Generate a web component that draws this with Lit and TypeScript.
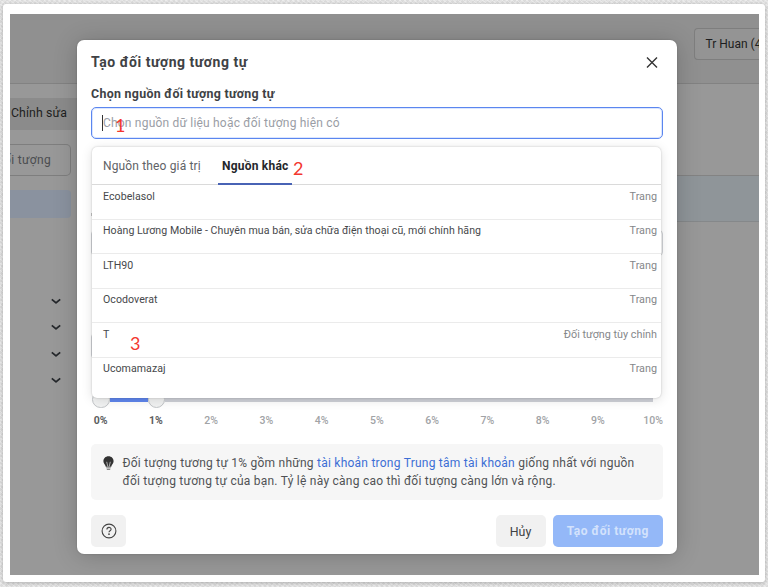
import { LitElement, html, css, svg } from "lit";
import { customElement } from "lit/decorators.js";

const SOURCES: [string, string][] = [
  ["Ecobelasol", "Trang"],
  ["Hoàng Lương Mobile - Chuyên mua bán, sửa chữa điện thoại cũ, mới chính hãng", "Trang"],
  ["LTH90", "Trang"],
  ["Ocodoverat", "Trang"],
  ["T", "Đối tượng tùy chỉnh"],
  ["Ucomamazaj", "Trang"],
];

const chevron = svg`<path d="M.8 1.4 L5 4.9 L9.2 1.4" fill="none" stroke="#24272b" stroke-width="1.8" stroke-linejoin="round"/>`;

@customElement("page-backdrop")
class PageBackdrop extends LitElement {
  static styles = css`
    :host { display: flex; flex-direction: column; height: 100%; background: #989898; color: #1d1e20; }
    .top { height: 70px; box-sizing: border-box; background: #909090; border-bottom: 1px solid #828282; display: flex; justify-content: flex-end; padding-top: 14px; }
    .account { box-sizing: border-box; width: 65px; height: 32px; border: 1px solid #7e7e7e; border-right: 0; border-radius: 4px 0 0 4px; background: #949494; padding-left: 10.5px; line-height: 30px; font-size: 12px; white-space: nowrap; overflow: hidden; }
    .body { flex: 1; display: flex; justify-content: space-between; }
    .left { width: 67px; display: flex; flex-direction: column; }
    .edit { margin-top: 14px; height: 32px; width: 67px; background: #8b8b8b; line-height: 31px; font-size: 12.3px; letter-spacing: .1px; padding-left: 1px; box-sizing: border-box; white-space: nowrap; }
    .search { margin-top: 14px; box-sizing: border-box; width: 61px; height: 32px; border: 1px solid #7e7e7e; border-left: 0; border-radius: 0 5px 5px 0; line-height: 30px; font-size: 12px; letter-spacing: .35px; color: #4b4d50; overflow: hidden; white-space: nowrap; }
    .search span { margin-left: -6px; }
    .selected { margin-top: 14px; width: 61px; height: 28px; background: #8a929f; border-radius: 0 4px 4px 0; }
    .chevrons { margin: 79.5px 0 0 41.2px; display: flex; flex-direction: column; gap: 20.5px; }
    .chevrons svg { display: block; width: 10px; height: 6px; }
    .right { width: 90px; padding-top: 91px; }
    .band { box-sizing: border-box; height: 47px; background: #8f9599; border-top: 1px solid #838383; border-bottom: 1px solid #85888a; }
  `;
  render() {
    return html`
      <div class="top"><div class="account">Tr Huan (4</div></div>
      <div class="body">
        <div class="left">
          <div class="edit">Chỉnh sửa</div>
          <div class="search"><span>ối tượng</span></div>
          <div class="selected"></div>
          <div class="chevrons">${[0, 1, 2, 3].map(() => html`<svg viewBox="0 0 10 6">${chevron}</svg>`)}</div>
        </div>
        <div class="right"><div class="band"></div></div>
      </div>`;
  }
}

@customElement("source-menu")
class SourceMenu extends LitElement {
  static styles = css`
    :host { display: block; box-sizing: border-box; width: 569px; height: 251.5px; background: #fff; border-radius: 5px; box-shadow: 0 0 2px rgba(0,0,0,.22), 0 2px 12px rgba(0,0,0,.12); overflow: hidden; }
    .tabs { height: 38.5px; box-sizing: border-box; border-bottom: 1px solid #dadada; display: flex; padding-left: 11px; font-size: 12px; line-height: 39px; color: #606266; white-space: nowrap; }
    .tab { width: 115px; letter-spacing: .15px; }
    .active { box-sizing: border-box; width: 74px; height: 38px; padding-left: 4px; border-bottom: 2.5px solid #4863b5; font-weight: 700; letter-spacing: .22px; color: #25272b; }
    .row { box-sizing: border-box; height: 34.5px; border-bottom: 1px solid #ebebeb; display: flex; justify-content: space-between; padding: 3.5px 4px 0 11px; font-size: 10.6px; letter-spacing: .05px; line-height: 15px; color: #46484b; white-space: nowrap; }
    .row:last-child { border: 0; }
    .kind { color: #85878a; font-size: 10.8px; letter-spacing: 0; }
  `;
  render() {
    return html`
      <div class="tabs"><div class="tab">Nguồn theo giá trị</div><div class="active">Nguồn khác</div></div>
      ${SOURCES.map(([name, kind]) => html`<div class="row"><span>${name}</span><span class="kind">${kind}</span></div>`)}`;
  }
}

@customElement("app-root")
class AppRoot extends LitElement {
  static styles = css`
    :host { display: block; box-sizing: border-box; width: 768px; height: 587px; padding: 4px 3px 5px; overflow: hidden; font-family: Roboto, "Noto Sans", sans-serif; background: repeating-linear-gradient(38deg, rgba(255,255,255,.35) 0 1px, transparent 1px 3px), repeating-linear-gradient(-52deg, #dcdcdc 0 2px, #e4e4e4 2px 4px); }
    .frame { position: relative; box-sizing: border-box; height: 578px; padding: 10px 6px 7px 7px; background: #fff; border-radius: 3px; box-shadow: 0 1px 4px rgba(0,0,0,.25); }
    .shot { position: relative; height: 561px; width: 749px; overflow: hidden; }
    .modal { position: absolute; left: 67px; top: 26px; width: 600px; height: 514px; box-sizing: border-box; padding: 14px 14px 7px; display: flex; flex-direction: column; background: #fff; border-radius: 7px; box-shadow: 0 2px 24px rgba(0,0,0,.2), 0 0 2px rgba(0,0,0,.2); color: #404245; }
    .head { display: flex; justify-content: space-between; height: 18px; line-height: 17px; font-size: 14px; font-weight: 700; letter-spacing: .53px; }
    .close { width: 12px; height: 12px; margin: 3px 5px 0 0; }
    .label { margin-top: 13px; height: 18px; line-height: 18px; font-size: 12.4px; font-weight: 700; letter-spacing: .3px; }
    .input { margin-top: 4px; box-sizing: border-box; height: 32px; border: 1px solid #5b86ef; border-radius: 5px; box-shadow: inset 0 0 0 1px #dbe6ff; display: flex; align-items: center; padding-left: 10px; font-size: 12px; letter-spacing: .2px; color: #9a9da5; white-space: nowrap; }
    .caret { width: 1px; height: 16px; background: #333; }
    .covered { height: 259px; box-sizing: border-box; padding-top: 74px; display: flex; flex-direction: column; }
    .stub { height: 3px; width: 1px; background: #c4c4c4; }
    .field { box-sizing: border-box; height: 26px; flex: none; border: 1px solid #cfd1d5; border-radius: 4px; }
    .f1 { margin-top: 14px; }
    .f2 { margin-top: 77px; width: 500px; }
    .slider { height: 13px; display: flex; align-items: flex-start; padding: 0 10px 0 1px; }
    .knob { box-sizing: border-box; flex: none; width: 17.5px; height: 17.5px; margin-top: -6px; border: 1px solid #c2c5c8; border-radius: 50%; background: #f1f2f2; }
    .fill { height: 4px; width: 38px; margin-top: 1px; background: #5f86ee; }
    .rail { height: 4px; flex: 1; margin-top: 1px; background: #ced0d7; }
    .ticks { display: flex; width: 607px; margin-left: -18px; height: 14px; margin-top: 5px; line-height: 14px; font-size: 10.5px; font-weight: 500; color: #a1a3a6; }
    .ticks span { flex: 0 0 55.25px; text-align: center; }
    .ticks .on { color: #5b5d60; font-weight: 700; }
    .info { margin-top: 16px; box-sizing: border-box; height: 56px; flex: none; border-radius: 5px; background: #f6f6f6; display: flex; padding: 10px 12px; font-size: 12px; letter-spacing: .24px; line-height: 18px; color: #505255; white-space: nowrap; }
    .bulb { width: 11px; height: 15px; margin: 2px 8.5px 0 0; }
    .link { color: #3c6ed5; }
    .foot { margin-top: 14.6px; display: flex; height: 32px; gap: 7px; }
    .btn { box-sizing: border-box; height: 32px; border-radius: 5px; background: #f1f1f1; display: flex; align-items: center; justify-content: center; font-size: 12px; font-weight: 500; }
    .help { width: 35px; margin-right: auto; }
    .cancel { width: 50px; font-size: 12.4px; font-weight: 400; }
    .create { width: 110.5px; background: #94b8f8; color: #d3e2fc; font-weight: 700; letter-spacing: .54px; }
    .menu { position: absolute; left: 15px; top: 106.5px; }
    .mark { position: absolute; font: 18px/20px Lato, sans-serif; color: #f3372f; }
    .m1 { left: 112px; top: 111px; }
    .m2 { left: 290px; top: 154px; }
    .m3 { left: 127px; top: 328.5px; }
  `;
  render() {
    return html`
      <div class="frame">
        <div class="shot">
          <page-backdrop></page-backdrop>
          <div class="modal">
            <div class="head"><span>Tạo đối tượng tương tự</span>
              <svg class="close" viewBox="0 0 12 12"><path d="M1 .6 L11 10.6 M11 .6 L1 10.6" stroke="#333" stroke-width="1.4"/></svg>
            </div>
            <div class="label">Chọn nguồn đối tượng tương tự</div>
            <div class="input"><span class="caret"></span><span class="ph">Chọn nguồn dữ liệu hoặc đối tượng hiện có</span></div>
            <div class="covered"><div class="stub"></div><div class="field f1"></div><div class="field f2"></div></div>
            <div class="slider"><i class="knob"></i><i class="fill"></i><i class="knob"></i><i class="rail"></i></div>
            <div class="ticks">${Array.from({ length: 11 }, (_, i) => html`<span class=${i < 2 ? "on" : ""}>${i}%</span>`)}</div>
            <div class="info">
              <svg class="bulb" viewBox="0 0 11 15"><path d="M5.5 .3 C2.4 .3 .4 2.5 .4 5.2 C.4 7.3 2.3 8.5 2.8 10.7 H8.2 C8.7 8.5 10.6 7.3 10.6 5.2 C10.6 2.5 8.6 .3 5.5 .3Z" fill="#333"/><path d="M3.7 5.8 L4.8 10.6 M7.3 5.8 L6.2 10.6" fill="none" stroke="#ccc" stroke-width=".8"/><path d="M3.2 11.8H7.8M3.8 13.4H7.2" stroke="#888" stroke-width="1.1"/></svg>
              <div><div>Đối tượng tương tự 1% gồm những <span class="link">tài khoản trong Trung tâm tài khoản</span> giống nhất với nguồn</div><div>đối tượng tương tự của bạn. Tỷ lệ này càng cao thì đối tượng càng lớn và rộng.</div></div>
            </div>
            <div class="foot">
              <div class="btn help"><svg width="16" height="16" viewBox="0 0 16 16" fill="none" stroke="#444" stroke-width="1.1"><circle cx="8" cy="8" r="6.9"/><path d="M5.9 6.4 C5.9 3.7 10.1 3.8 10.1 6.2 C10.1 7.7 8 7.7 8 9.3"/><circle cx="8" cy="11.2" r=".35"/></svg></div>
              <div class="btn cancel">Hủy</div>
              <div class="btn create">Tạo đối tượng</div>
            </div>
            <source-menu class="menu"></source-menu>
          </div>
        </div>
        <span class="mark m1">1</span><span class="mark m2">2</span><span class="mark m3">3</span>
      </div>`;
  }
}
